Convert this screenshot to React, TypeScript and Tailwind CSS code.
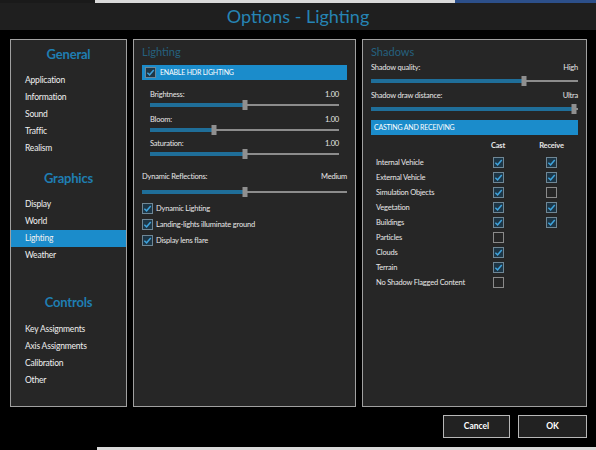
import React from "react";

const font = { fontFamily: 'Lato, "Open Sans", sans-serif' };

function Check({ on }: { on: boolean }) {
  return (
    <span className={`flex h-[11px] w-[11px] shrink-0 items-center justify-center border ${on ? "border-[#6f8796] bg-[#1d3646]" : "border-[#8a8a8a] bg-[#262626]"}`}>
      {on && (
        <svg viewBox="0 0 10 10" className="h-[9px] w-[9px]">
          <path d="M1.5 5.2 L4 7.6 L8.6 2.2" fill="none" stroke="#3fa3dc" strokeWidth="1.6" />
        </svg>
      )}
    </span>
  );
}

function Slider({ pct }: { pct: number }) {
  return (
    <div className="relative h-[10px] w-full">
      <div className="absolute left-0 right-0 top-[4px] h-[2px] bg-[#8c8c8c]" />
      <div className="absolute left-0 top-[3px] h-[4px] bg-[#1f6e99]" style={{ width: `${pct}%` }} />
      <div className="absolute top-0 h-[10px] w-[5px] -translate-x-1/2 bg-[#8f8f8f]" style={{ left: `${pct}%` }} />
    </div>
  );
}

function Labeled({ label, value, pct, gap = "" }: { label: string; value: string; pct: number; gap?: string }) {
  return (
    <div className={`flex flex-col ${gap}`}>
      <div className="flex h-[10px] items-center justify-between text-[7.5px] tracking-[-0.2px] text-[#e6e6e6]">
        <span>{label}</span>
        <span>{value}</span>
      </div>
      <Slider pct={pct} />
    </div>
  );
}

const nav = [
  { title: "General", items: ["Application", "Information", "Sound", "Traffic", "Realism"] },
  { title: "Graphics", items: ["Display", "World", "Lighting", "Weather"] },
  { title: "Controls", items: ["Key Assignments", "Axis Assignments", "Calibration", "Other"] },
];

const shadowRows: [string, boolean, boolean | null][] = [
  ["Internal Vehicle", true, true],
  ["External Vehicle", true, true],
  ["Simulation Objects", true, false],
  ["Vegetation", true, true],
  ["Buildings", true, true],
  ["Particles", false, null],
  ["Clouds", true, null],
  ["Terrain", true, null],
  ["No Shadow Flagged Content", false, null],
];

export default function App() {
  return (
    <div className="flex h-[450px] w-[596px] flex-col overflow-hidden bg-black" style={font}>
      <div className="flex h-[3px]">
        <div className="w-[95px] bg-[#1a1a1a]" />
        <div className="w-[360px] bg-[#d9d9d9]" />
        <div className="flex-1 bg-[#2c4f8a]" />
      </div>
      <div className="flex h-[27px] items-center justify-center bg-[#1f1f1f] text-[18px] text-[#2684b4]">
        Options - Lighting
      </div>

      <div className="mt-[9px] flex h-[368px] gap-[6px] pl-[10px] pr-[9px]">
        {/* left nav */}
        <div className="flex w-[117px] flex-col border border-[#a0a0a0] bg-[#262626] pt-[6px]">
          {nav.map((g, gi) => (
            <div key={g.title} className={gi === 1 ? "mt-[13px]" : gi === 2 ? "mt-[30px]" : ""}>
              <div className={`${gi === 2 ? "mb-[10px]" : "mb-[9px]"} h-[17px] text-center text-[13px] font-bold leading-[17px] tracking-[-0.2px] text-[#1f7eb2]`}>{g.title}</div>
              {g.items.map((it) => (
                <div
                  key={it}
                  className={`flex h-[17px] items-center pl-[14px] text-[8.5px] tracking-[-0.2px] text-[#f0f0f0] ${it === "Lighting" ? "bg-[#1b8ccb]" : ""}`}
                >
                  {it}
                </div>
              ))}
            </div>
          ))}
        </div>

        {/* middle */}
        <div className="flex w-[223px] flex-col border border-[#a0a0a0] bg-[#262626] px-[8px] pt-[4px]">
          <div className="h-[15px] text-[11px] leading-[15px] text-[#25617f]">Lighting</div>
          <div className="mt-[6px] flex h-[15px] items-center gap-[4px] bg-[#1b8ccb] pl-[3px] text-[7px] tracking-[-0.2px] text-white">
            <Check on />
            <span>ENABLE HDR LIGHTING</span>
          </div>
          <div className="mt-[10px] flex flex-col gap-[4.5px] pl-[8px] pr-[8px]">
            <Labeled label="Brightness:" value="1.00" pct={50} />
            <Labeled label="Bloom:" value="1.00" pct={34} />
            <Labeled label="Saturation:" value="1.00" pct={50} />
          </div>
          <div className="mt-[13px]">
            <Labeled label="Dynamic Reflections:" value="Medium" pct={50} gap="gap-[5px]" />
          </div>
          <div className="mt-[6px] flex flex-col gap-[5px] text-[7.5px] tracking-[-0.2px] text-[#e6e6e6]">
            {["Dynamic Lighting", "Landing-lights illuminate ground", "Display lens flare"].map((t) => (
              <div key={t} className="flex h-[11px] items-center gap-[3px]">
                <Check on />
                <span>{t}</span>
              </div>
            ))}
          </div>
        </div>

        {/* right */}
        <div className="flex w-[225px] flex-col border border-[#a0a0a0] bg-[#262626] px-[8px] pt-[4px]">
          <div className="h-[15px] text-[11px] leading-[15px] text-[#25617f]">Shadows</div>
          <div className="mt-[4px] flex flex-col gap-[5px]">
            <Labeled label="Shadow quality:" value="High" pct={74} gap="gap-[3px]" />
            <Labeled label="Shadow draw distance:" value="Ultra" pct={98} gap="gap-[3px]" />
          </div>
          <div className="mt-[6px] flex h-[15px] items-center bg-[#1b8ccb] pl-[3px] text-[7px] tracking-[-0.2px] text-white">
            CASTING AND RECEIVING
          </div>
          <div className="mt-[5px] grid h-[11px] grid-cols-[112px_30px_70px] items-center text-[7.5px] tracking-[-0.2px] text-[#e6e6e6]">
            <span />
            <span className="text-center font-bold">Cast</span>
            <span className="pl-[7px] text-center font-bold">Receive</span>
          </div>
          <div className="mt-[4px] flex flex-col">
            {shadowRows.map(([name, cast, rec]) => (
              <div key={name} className="grid h-[15px] grid-cols-[112px_30px_70px] items-center text-[7.5px] tracking-[-0.2px] text-[#e6e6e6]">
                <span className="pl-[5px]">{name}</span>
                <span className="flex justify-center"><Check on={cast} /></span>
                <span className="flex justify-center pl-[7px]">{rec !== null && <Check on={rec} />}</span>
              </div>
            ))}
          </div>
        </div>
      </div>

      <div className="mt-[8px] flex justify-end gap-[8px] pr-[9px]">
        <button className="h-[23px] w-[67px] border border-[#b8b8b8] bg-[#222] text-[8.5px] font-bold text-white">Cancel</button>
        <button className="h-[23px] w-[69px] border border-[#b8b8b8] bg-[#222] text-[8.5px] font-bold text-white">OK</button>
      </div>
      <div className="mt-auto flex h-[3px]">
        <div className="w-[97px]" />
        <div className="flex-1 bg-[#d9d9d9]" />
      </div>
    </div>
  );
}
